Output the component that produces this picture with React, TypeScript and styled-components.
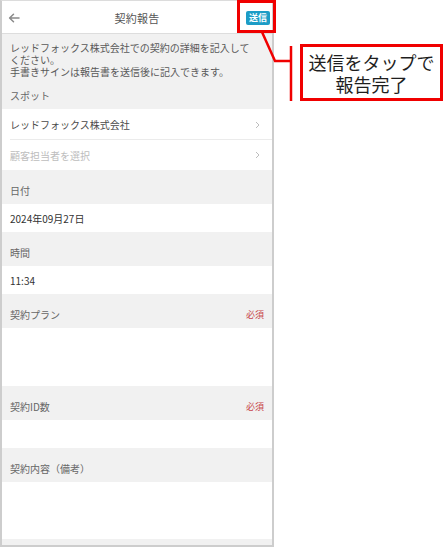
import React from "react";
import styled, { createGlobalStyle } from "styled-components";

const GlobalStyle = createGlobalStyle`
  html, body { margin: 0; padding: 0; background: #ffffff; }
  body {
    font-family: "Noto Sans CJK JP", "Noto Sans", sans-serif;
    -webkit-font-smoothing: antialiased;
  }
`;

const Page = styled.div`
  position: relative;
  width: 447px;
  height: 547px;
  display: flex;
  align-items: flex-start;
  overflow: hidden;
`;

const Phone = styled.div`
  width: 274px;
  height: 547px;
  box-sizing: border-box;
  border: 2px solid #cdcdcd;
  border-top: 1px solid #dcdcdc;
  background: #f1f1f1;
  display: flex;
  flex-direction: column;
  overflow: hidden;
`;

const Header = styled.header`
  height: 31px;
  flex: none;
  background: #ffffff;
  border-bottom: 1px solid #dddddd;
  display: grid;
  grid-template-columns: 40px 1fr 40px;
  align-items: center;
  padding-top: 1px;
  box-sizing: content-box;
`;

const BackButton = styled.div`
  display: flex;
  align-items: center;
  padding-left: 6px;
  color: #8a8a8a;
`;

const Title = styled.div`
  text-align: center;
  font-size: 11px;
  color: #555555;
  letter-spacing: 0.3px;
`;

const SendWrap = styled.div`
  display: flex;
  justify-content: flex-end;
  padding-right: 2px;
`;

const SendButton = styled.div`
  width: 24px;
  height: 14px;
  border-radius: 2px;
  background: #1c9cc6;
  color: #ffffff;
  font-size: 9px;
  font-weight: 700;
  line-height: 14px;
  text-align: center;
`;

const Intro = styled.div`
  padding: 8px 8px 0;
  display: flex;
  flex-direction: column;
`;

const IntroLine = styled.div`
  height: 12px;
  font-size: 10px;
  line-height: 12px;
  color: #595959;
  white-space: nowrap;
`;

const SectionHeader = styled.div<{ $first?: boolean }>`
  flex: none;
  display: flex;
  justify-content: space-between;
  align-items: center;
  padding: ${(p) => (p.$first ? "11px" : "14px")} 8px 6px;
  height: 14px;
  font-size: 10px;
  line-height: 14px;
  color: #666666;
`;

const Required = styled.span`
  font-size: 9px;
  color: #c8464a;
`;

const Row = styled.div<{ $h?: number; $divider?: boolean }>`
  flex: none;
  height: ${(p) => p.$h ?? 28}px;
  background: #ffffff;
  display: flex;
  align-items: center;
  justify-content: space-between;
  padding: 0 12px 0 8px;
  position: relative;
  ${(p) =>
    p.$divider
      ? `&::after { content: ""; position: absolute; left: 8px; right: 0; bottom: 0; height: 1px; background: #ebebeb; }`
      : ""}
`;

const RowText = styled.span<{ $muted?: boolean; $dark?: boolean }>`
  font-size: 10px;
  color: ${(p) => (p.$muted ? "#bdbdbd" : p.$dark ? "#333333" : "#4a4a4a")};
`;

const Callout = styled.div`
  position: absolute;
  left: 300px;
  top: 44px;
  width: 143px;
  height: 57px;
  box-sizing: border-box;
  border: 3px solid #f00000;
  background: #ffffff;
  display: flex;
  flex-direction: column;
  align-items: center;
  padding-top: 4px;
`;

const CalloutLine = styled.div`
  height: 22px;
  font-size: 18px;
  line-height: 22px;
  color: #1e1e1e;
  white-space: nowrap;
`;

const Overlay = styled.svg`
  position: absolute;
  left: 0;
  top: 0;
  pointer-events: none;
`;

const Chevron = () => (
  <svg width="5" height="8" viewBox="0 0 5 8">
    <polyline points="1,1 4,4 1,7" fill="none" stroke="#bdbdbd" strokeWidth="1" />
  </svg>
);

const BackArrow = () => (
  <svg width="12" height="10" viewBox="0 0 12 10">
    <path d="M11 5H2M5.5 1.2L1.6 5l3.9 3.8" fill="none" stroke="#8a8a8a" strokeWidth="1.5" strokeLinecap="round" strokeLinejoin="round" />
  </svg>
);

export default function App() {
  return (
    <>
      <GlobalStyle />
      <Page>
        <Phone>
          <Header>
            <BackButton>
              <BackArrow />
            </BackButton>
            <Title>契約報告</Title>
            <SendWrap>
              <SendButton>送信</SendButton>
            </SendWrap>
          </Header>
          <Intro>
            <IntroLine>レッドフォックス株式会社での契約の詳細を記入して</IntroLine>
            <IntroLine>ください。</IntroLine>
            <IntroLine>手書きサインは報告書を送信後に記入できます。</IntroLine>
          </Intro>
          <SectionHeader $first>スポット</SectionHeader>
          <Row $h={31} $divider>
            <RowText>レッドフォックス株式会社</RowText>
            <Chevron />
          </Row>
          <Row $h={30}>
            <RowText $muted>顧客担当者を選択</RowText>
            <Chevron />
          </Row>
          <SectionHeader>日付</SectionHeader>
          <Row>
            <RowText $dark>2024年09月27日</RowText>
          </Row>
          <SectionHeader>時間</SectionHeader>
          <Row>
            <RowText $dark>11:34</RowText>
          </Row>
          <SectionHeader>
            契約プラン<Required>必須</Required>
          </SectionHeader>
          <Row $h={58} />
          <SectionHeader>
            契約ID数<Required>必須</Required>
          </SectionHeader>
          <Row />
          <SectionHeader>契約内容（備考）</SectionHeader>
          <Row $h={57} />
        </Phone>
        <Overlay width="447" height="547" viewBox="0 0 447 547">
          <rect x="238.5" y="1.5" width="36" height="30" fill="none" stroke="#f00000" strokeWidth="3" />
          <polyline points="262,32 275,61 291,61" fill="none" stroke="#f00000" strokeWidth="2.5" />
          <line x1="291" y1="46" x2="291" y2="101" stroke="#f00000" strokeWidth="2.5" />
        </Overlay>
        <Callout>
          <CalloutLine>送信をタップで</CalloutLine>
          <CalloutLine>報告完了</CalloutLine>
        </Callout>
      </Page>
    </>
  );
}
